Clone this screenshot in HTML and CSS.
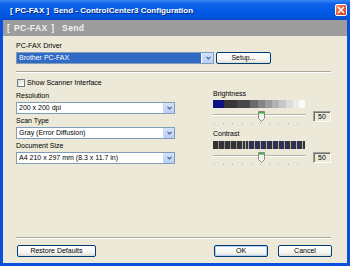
FILE: index.html
```html
<!DOCTYPE html>
<html lang="en">
<head>
    <meta charset="UTF-8">
    <title>[ PC-FAX ] Send - ControlCenter3 Configuration</title>
    <link rel="stylesheet" href="styles.css">
</head>
<body>

    <div class="window">
        <!-- Title bar -->
        <div class="titlebar">
            <span class="title">[ PC-FAX ]&nbsp; Send - ControlCenter3 Configuration</span>
            <span class="close">
                <svg width="8" height="8" viewBox="0 0 8 8"><path d="M1 1L7 7M7 1L1 7" stroke="#fff" stroke-width="1.6"/></svg>
            </span>
        </div>

        <div class="frame">
            <div class="band">[ PC-FAX ]&nbsp; Send</div>

            <div class="content">
                <!-- Driver -->
                <div class="label top">PC-FAX Driver</div>
                <div class="driver-row">
                    <div class="combo driver">
                        <span class="combo-text selected">Brother PC-FAX</span>
                        <span class="combo-btn"><svg width="5" height="4" viewBox="0 0 5 4"><path d="M0.5 0.8L2.5 2.8L4.5 0.8" fill="none" stroke="#4d6185" stroke-width="1.2"/></svg></span>
                    </div>
                    <button class="btn setup">Setup...</button>
                </div>

                <div class="sep"></div>

                <div class="check"><span class="box"></span>Show Scanner Interface</div>

                <div class="columns">
                    <div class="col-left">
                        <div class="field">
                            <div class="label">Resolution</div>
                            <div class="combo">
                                <span class="combo-text">200 x 200 dpi</span>
                                <span class="combo-btn"><svg width="5" height="4" viewBox="0 0 5 4"><path d="M0.5 0.8L2.5 2.8L4.5 0.8" fill="none" stroke="#4d6185" stroke-width="1.2"/></svg></span>
                            </div>
                        </div>
                        <div class="field">
                            <div class="label">Scan Type</div>
                            <div class="combo">
                                <span class="combo-text">Gray (Error Diffusion)</span>
                                <span class="combo-btn"><svg width="5" height="4" viewBox="0 0 5 4"><path d="M0.5 0.8L2.5 2.8L4.5 0.8" fill="none" stroke="#4d6185" stroke-width="1.2"/></svg></span>
                            </div>
                        </div>
                        <div class="field">
                            <div class="label">Document Size</div>
                            <div class="combo">
                                <span class="combo-text">A4 210 x 297 mm (8.3 x 11.7 in)</span>
                                <span class="combo-btn"><svg width="5" height="4" viewBox="0 0 5 4"><path d="M0.5 0.8L2.5 2.8L4.5 0.8" fill="none" stroke="#4d6185" stroke-width="1.2"/></svg></span>
                            </div>
                        </div>
                    </div>

                    <div class="col-right">
                        <div class="label">Brightness</div>
                        <div class="bar brightness"></div>
                        <div class="slider-row">
                            <div class="slider">
                                <div class="track"></div>
                                <div class="ticks"></div>
                                <svg class="thumb" width="7" height="11" viewBox="0 0 7 11"><path d="M0.5 0.5H6.5V7.5L3.5 10.5L0.5 7.5Z" fill="#f4f3ee" stroke="#8a8a84"/><rect x="1" y="1" width="5" height="1.6" fill="#3cb43c"/></svg>
                            </div>
                            <div class="value">50</div>
                        </div>

                        <div class="label">Contrast</div>
                        <div class="bar contrast"></div>
                        <div class="slider-row">
                            <div class="slider">
                                <div class="track"></div>
                                <div class="ticks"></div>
                                <svg class="thumb" width="7" height="11" viewBox="0 0 7 11"><path d="M0.5 0.5H6.5V7.5L3.5 10.5L0.5 7.5Z" fill="#f4f3ee" stroke="#8a8a84"/><rect x="1" y="1" width="5" height="1.6" fill="#3cb43c"/></svg>
                            </div>
                            <div class="value">50</div>
                        </div>
                    </div>
                </div>

                <div class="sep bottom"></div>

                <div class="buttons">
                    <button class="btn restore">Restore Defaults</button>
                    <span class="spacer"></span>
                    <button class="btn ok">OK</button>
                    <button class="btn cancel">Cancel</button>
                </div>
            </div>
        </div>
    </div>

</body>
</html>
```

FILE: styles.css
```css
body {
    margin: 0;
    font-family: "Liberation Sans", Arial, sans-serif;
    font-size: 7px;
    color: #000;
}
.window {
    width: 350px;
    height: 266px;
    display: flex;
    flex-direction: column;
    background: #ece9d8;
}
.titlebar {
    height: 20px;
    flex: none;
    display: flex;
    align-items: center;
    justify-content: space-between;
    padding: 0 3px 0 10px;
    background: linear-gradient(#3a86f4, #0e62ea 20%, #0058e6 60%, #0254dc 90%, #0a4ac8);
}
.title {
    color: #fff;
    font-weight: bold;
    font-size: 8px;
    text-shadow: 1px 1px 0 #0a2a7a;
}
.close {
    width: 12px;
    height: 12px;
    box-sizing: border-box;
    border: 1px solid #fff;
    border-radius: 2px;
    background: linear-gradient(135deg, #f49a74, #e85a32 45%, #d2461f);
    display: flex;
    align-items: center;
    justify-content: center;
}
.frame {
    flex: 1;
    display: flex;
    flex-direction: column;
    border: 3px solid #0a50dc;
    border-top: none;
}
.band {
    height: 16px;
    flex: none;
    display: flex;
    align-items: center;
    padding-left: 4px;
    background: #9d9d9d;
    color: #f2f2f2;
    font-weight: bold;
    font-size: 8.5px;
    letter-spacing: 0.4px;
    word-spacing: 1px;
}
.content {
    flex: 1;
    display: flex;
    flex-direction: column;
    padding: 0 16px 6px 13px;
}
.label {
    height: 10px;
    line-height: 10px;
    white-space: nowrap;
}
.label.top {
    margin-top: 5px;
    margin-bottom: 1px;
}
.driver-row {
    display: flex;
    align-items: center;
}
.combo {
    height: 12px;
    box-sizing: border-box;
    border: 1px solid #7f9db9;
    background: #fff;
    display: flex;
    align-items: stretch;
}
.combo.driver {
    width: 198px;
}
.combo-text {
    flex: 1;
    line-height: 10px;
    padding-left: 2px;
    white-space: nowrap;
    overflow: hidden;
}
.combo-text.selected {
    background: #316ac5;
    color: #fff;
    margin: 0 1px 0 0;
}
.combo-btn {
    width: 10px;
    border-radius: 1px;
    background: linear-gradient(#d4e2fc, #b9cdf7);
    border-left: 1px solid #c6d6f8;
    display: flex;
    align-items: center;
    justify-content: center;
}
.btn {
    height: 12px;
    padding: 0;
    box-sizing: border-box;
    border: 1px solid #003c74;
    border-radius: 2px;
    background: linear-gradient(#ffffff, #f4f4f0 70%, #dedbd0);
    font-family: "Liberation Sans", Arial, sans-serif;
    font-size: 7px;
    line-height: 10px;
    color: #000;
}
.setup {
    width: 55px;
    margin-left: 2px;
}
.sep {
    height: 1px;
    margin-top: 7px;
    background: #aca899;
    border-bottom: 1px solid #fff;
}
.check {
    margin-top: 5px;
    height: 9px;
    display: flex;
    align-items: center;
    gap: 2px;
    white-space: nowrap;
}
.box {
    width: 8px;
    height: 8px;
    box-sizing: border-box;
    margin-left: 1px;
    border: 1px solid #707a8c;
    background: linear-gradient(135deg, #dcdcd6, #fff);
}
.columns {
    display: flex;
    gap: 38px;
}
.col-left {
    width: 159px;
    padding-top: 4px;
    display: flex;
    flex-direction: column;
    gap: 2px;
}
.field .combo {
    margin-top: 1px;
}
.col-right {
    width: 118px;
    padding-top: 2px;
}
.bar {
    width: 92px;
    height: 8px;
    margin-top: 1px;
}
.brightness {
    background: linear-gradient(90deg,
        #0c1280 0 11px, #363636 11px 24px, #484848 24px 37px,
        #6a6a6a 37px 45px, #858585 45px 52px, #9c9c9c 52px 59px,
        #b2b2b2 59px 66px, #c8c8c8 66px 73px, #dcdcd8 73px 80px,
        #ecece8 80px 86px, #fbfbfb 86px);
}
.contrast {
    margin-top: 2px;
    background:
        repeating-linear-gradient(90deg, #333 0 5px, #8e8e8e 5px 6px) 0 0 / 28px 100% no-repeat,
        repeating-linear-gradient(90deg, transparent 0 4px, #1a2aa8 4px 5px, transparent 5px 6px) 34px 0 / 58px 100% no-repeat,
        repeating-linear-gradient(90deg, #333 0 2px, #b0b0b0 2px 3px);
}
.slider-row {
    display: flex;
    align-items: flex-start;
    gap: 7px;
    height: 15px;
    margin-top: 3px;
    margin-bottom: 3px;
}
.slider {
    position: relative;
    width: 93px;
    height: 15px;
}
.track {
    margin-top: 3px;
    height: 1px;
    background: #b5b2a6;
    border-bottom: 1px solid #fff;
}
.ticks {
    margin: 7px 0 0 1px;
    height: 1px;
    background: repeating-linear-gradient(90deg, #a8a8a0 0 1px, transparent 1px 9.2px);
}
.thumb {
    position: absolute;
    left: 45px;
    top: 0;
}
.value {
    width: 18px;
    height: 11px;
    box-sizing: border-box;
    border: 1px solid #a0a0a0;
    border-right-color: #fff;
    border-bottom-color: #fff;
    box-shadow: inset 1px 1px 0 #707070;
    background: #ece9d8;
    text-align: center;
    line-height: 9px;
}
.sep.bottom {
    margin-top: auto;
}
.buttons {
    display: flex;
    margin-top: 6px;
    margin-right: -1px;
}
.restore {
    width: 79px;
    margin-left: 1px;
}
.spacer {
    flex: 1;
}
.ok {
    width: 54px;
    box-shadow: inset 0 0 0 1px #b4cdf5;
}
.cancel {
    width: 54px;
    margin-left: 10px;
}
```
